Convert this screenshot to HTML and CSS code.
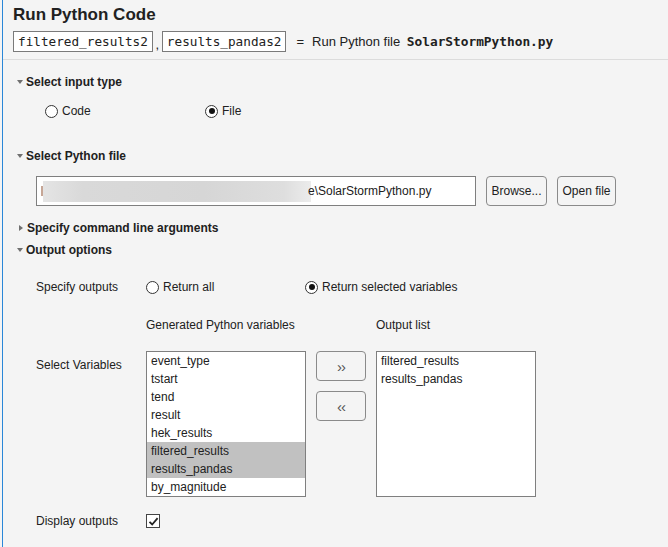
FILE: index.html
```html
<!DOCTYPE html>
<html>
<head>
<meta charset="utf-8">
<link rel="stylesheet" href="styles.css">
</head>
<body>
<div class="app">
  <div class="panel">
    <div class="header">
      <div class="title">Run Python Code</div>
      <div class="expr">
        <span class="codebox">filtered_results2</span><span class="comma">,</span><span class="codebox">results_pandas2</span>
        <span class="eq">=</span>
        <span class="desc">Run Python file <span class="mono">SolarStormPython.py</span></span>
      </div>
    </div>

    <div class="content">
      <div class="sechead s1"><span class="tri-down"></span>Select input type</div>
      <div class="radios">
        <label class="radio"><span class="circle"></span>Code</label>
        <label class="radio"><span class="circle on"></span>File</label>
      </div>

      <div class="sechead s2"><span class="tri-down"></span>Select Python file</div>
      <div class="filerow">
        <div class="fileinput"><span class="sliver"></span><span class="blur"></span><span class="path">e\SolarStormPython.py</span></div>
        <button class="btn browse">Browse...</button>
        <button class="btn open">Open file</button>
      </div>

      <div class="sechead s3"><span class="tri-right"></span>Specify command line arguments</div>
      <div class="sechead s4"><span class="tri-down"></span>Output options</div>

      <div class="grid">
        <div class="lbl r1">Specify outputs</div>
        <div class="outradios r1">
          <label class="radio"><span class="circle"></span>Return all</label>
          <label class="radio"><span class="circle on"></span>Return selected variables</label>
        </div>

        <div class="collbl c2 r2">Generated Python variables</div>
        <div class="collbl c4 r2">Output list</div>

        <div class="lbl top r3">Select Variables</div>
        <div class="list c2 r3">
          <div class="item">event_type</div>
          <div class="item">tstart</div>
          <div class="item">tend</div>
          <div class="item">result</div>
          <div class="item">hek_results</div>
          <div class="item sel">filtered_results</div>
          <div class="item sel">results_pandas</div>
          <div class="item">by_magnitude</div>
        </div>
        <div class="movebtns c3 r3">
          <button class="btn mv">&#8250;&#8250;</button>
          <button class="btn mv">&#8249;&#8249;</button>
        </div>
        <div class="list c4 r3">
          <div class="item">filtered_results</div>
          <div class="item">results_pandas</div>
        </div>

        <div class="lbl r4">Display outputs</div>
        <div class="c2 r4 chkcell"><span class="check"><svg width="11" height="11" viewBox="0 0 11 11"><path d="M1.5 5.8 L4.2 8.5 L9.6 2.2" fill="none" stroke="#222" stroke-width="1.8"/></svg></span></div>
      </div>
    </div>
  </div>
</div>
</body>
</html>
```

FILE: styles.css
```css
html, body {
  margin: 0;
  padding: 0;
  background: #f4f4f4;
}
body {
  font-family: "Liberation Sans", Arial, sans-serif;
  font-size: 12px;
  color: #212121;
}
.app {
  width: 668px;
  height: 547px;
  padding-left: 2px;
  box-sizing: border-box;
  overflow: hidden;
}
.panel {
  border-left: 1px solid #2a87d8;
  height: 547px;
  box-sizing: border-box;
}
.header {
  height: 60px;
  box-sizing: border-box;
  border-bottom: 1px solid #dcdcdc;
  padding: 5px 0 0 10px;
}
.title {
  font-weight: bold;
  font-size: 17px;
  line-height: 20px;
  height: 20px;
}
.expr {
  margin-top: 6px;
  display: flex;
  align-items: center;
  height: 21px;
  font-size: 13px;
}
.codebox {
  font-family: "DejaVu Sans Mono", monospace;
  font-size: 12.7px;
  border: 1px solid #7a7a7a;
  background: #fff;
  height: 21px;
  line-height: 19px;
  box-sizing: border-box;
  padding: 0 4px;
}
.comma {
  width: 9px;
  text-align: center;
  padding-top: 6px;
}
.eq {
  margin-left: 10px;
}
.desc {
  margin-left: 8px;
}
.mono {
  font-family: "DejaVu Sans Mono", monospace;
  font-size: 12.8px;
  font-weight: bold;
  margin-left: 3px;
}
.sechead {
  height: 22px;
  line-height: 22px;
  font-weight: bold;
  display: flex;
  align-items: center;
  padding-left: 14px;
}
.s1 { margin-top: 11px; }
.s2 { margin-top: 23px; }
.s3 { margin-top: 11px; }
.s4 { margin-top: 0; }
.tri-down {
  width: 0;
  height: 0;
  border-left: 3.5px solid transparent;
  border-right: 3.5px solid transparent;
  border-top: 4px solid #707070;
  margin-right: 3px;
}
.tri-right {
  width: 0;
  height: 0;
  border-top: 3.5px solid transparent;
  border-bottom: 3.5px solid transparent;
  border-left: 4px solid #707070;
  margin-left: 2px;
  margin-right: 4px;
}
.radios {
  margin-top: 7px;
  height: 22px;
  display: flex;
  padding-left: 42px;
}
.radio {
  display: flex;
  align-items: center;
  width: 160px;
  height: 22px;
}
.circle {
  width: 13px;
  height: 13px;
  box-sizing: border-box;
  border: 1px solid #333;
  border-radius: 50%;
  background: #fff;
  margin-right: 4px;
  display: flex;
  align-items: center;
  justify-content: center;
}
.circle.on::after {
  content: "";
  width: 6px;
  height: 6px;
  border-radius: 50%;
  background: #111;
}
.filerow {
  margin-top: 9px;
  display: flex;
  padding-left: 33px;
  height: 30px;
}
.fileinput {
  width: 440px;
  height: 30px;
  box-sizing: border-box;
  border: 1px solid #7f7f7f;
  background: #fff;
  display: flex;
  align-items: center;
  padding-left: 4px;
  overflow: hidden;
}
.sliver {
  width: 2px;
  height: 10px;
  background: #a06a50;
  opacity: 0.6;
}
.blur {
  width: 268px;
  height: 21px;
  background: linear-gradient(to right, #e4e4e4, #d9d9d9 15%, #d6d6d6 60%, #dedede 90%, #ececec);
  margin-right: -3px;
}
.path {
  white-space: nowrap;
}
.btn {
  font-family: "Liberation Sans", Arial, sans-serif;
  font-size: 12px;
  color: #212121;
  background: #f4f4f4;
  border: 1px solid #8a8a8a;
  border-radius: 4px;
  height: 30px;
  padding: 0;
  margin-left: 10px;
}
.btn.browse { width: 61px; }
.btn.open { width: 59px; }
.grid {
  display: grid;
  grid-template-columns: 110px 160px 70px 160px;
  grid-template-rows: auto auto auto auto;
  padding-left: 33px;
  margin-top: 15px;
}
.grid > * {
  align-self: start;
}
.c2 { grid-column: 2; }
.c3 { grid-column: 3; }
.c4 { grid-column: 4; }
.r1 { grid-row: 1; height: 22px; }
.r2 { grid-row: 2; margin-top: 16px; height: 22px; }
.r3 { grid-row: 3; margin-top: 15px; }
.r4 { grid-row: 4; margin-top: 13px; height: 22px; }
.lbl {
  grid-column: 1;
  line-height: 22px;
}
.lbl.top {
  line-height: 18px;
  padding-top: 5px;
}
.outradios {
  grid-column: 2 / 5;
  display: flex;
}
.outradios .radio {
  width: 159px;
}
.collbl {
  line-height: 22px;
}
.list {
  width: 160px;
  height: 146px;
  box-sizing: border-box;
  border: 1px solid #7f7f7f;
  background: #fff;
}
.item {
  height: 18px;
  line-height: 18px;
  padding-left: 4px;
}
.item.sel {
  background: #c1c1c1;
}
.movebtns {
  display: flex;
  flex-direction: column;
  padding-left: 10px;
  gap: 10px;
}
.btn.mv {
  margin-left: 0;
  width: 50px;
  height: 30px;
  font-size: 15px;
  line-height: 15px;
  color: #555;
  letter-spacing: -1px;
}
.chkcell {
  display: flex;
  align-items: center;
}
.check {
  width: 14px;
  height: 14px;
  box-sizing: border-box;
  border: 1px solid #444;
  background: #fff;
  display: flex;
  align-items: center;
  justify-content: center;
}
```
